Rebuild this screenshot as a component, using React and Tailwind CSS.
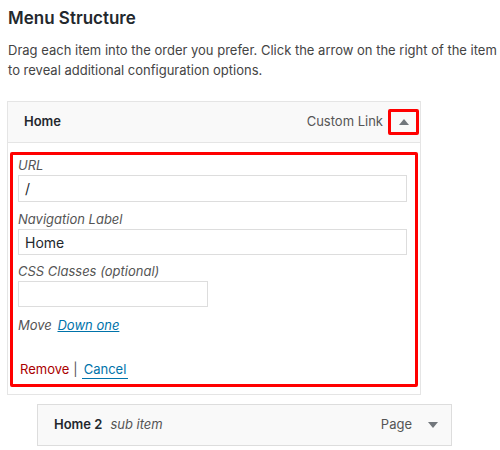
export default function App() {
  return (
    <div className="w-[500px] h-[450px] bg-white text-[#23282d] font-['Inter',sans-serif] overflow-hidden">
      <div className="pl-2 pt-[7px]">
        <h2 className="text-[17px] font-semibold leading-[22px]">Menu Structure</h2>
        <p className="mt-[11px] text-[13px] leading-5 text-[#444] whitespace-nowrap">
          Drag each item into the order you prefer. Click the arrow on the right of the item
          <br />
          to reveal additional configuration options.
        </p>
      </div>

      <div className="ml-[7px] mt-[21px] w-[414px] border border-[#e5e5e5] bg-white">
        <div className="h-[41px] flex items-center bg-[#f9f9f9] border-b border-[#e5e5e5] pl-[16px] pr-[1px]">
          <span className="text-[13px] font-semibold">Home</span>
          <span className="ml-auto text-[13px] text-[#555]">Custom Link</span>
          <span className="ml-[5px] w-[31px] h-[26px] border-[3px] border-[#ff0000] rounded-[2px] flex items-center justify-center">
            <svg width="10" height="6" viewBox="0 0 10 6">
              <path d="M5 0 L10 6 L0 6 Z" fill="#72777c" />
            </svg>
          </span>
        </div>

        <div className="px-[2px] pt-[9px] pb-[7px]">
          <div className="border-[3px] border-[#ff0000] rounded-[2px] pl-[5px] pr-[8px] pb-[5px]">
            <label className="block text-[13px] italic text-[#555] leading-5">URL</label>
            <div className="h-[27px] border border-[#ddd] flex items-center pl-[6px] text-[14px]">/</div>

            <label className="block mt-[7px] text-[13px] italic text-[#555] leading-5">Navigation Label</label>
            <div className="h-[26px] border border-[#ddd] flex items-center pl-[6px] text-[14px]">Home</div>

            <label className="block mt-[6px] text-[13px] italic text-[#555] leading-5">CSS Classes (optional)</label>
            <div className="w-[190px] h-[26px] border border-[#ddd]"></div>

            <div className="mt-[8px] text-[13px] leading-5 italic text-[#555]">
              Move <a className="ml-[2px] text-[#0073aa] underline">Down one</a>
            </div>

            <div className="mt-[24px] text-[13px] leading-5 flex items-center">
              <span className="ml-[2px] text-[#a00]">Remove</span>
              <span className="mx-[4px] text-[#555]">|</span>
              <span className="text-[#0073aa] border-b border-[#0073aa] leading-[18px] px-[2px]">Cancel</span>
            </div>
          </div>
        </div>
      </div>

      <div className="ml-[37px] mt-[9px] w-[415px] h-[42px] border border-[#ddd] bg-[#f9f9f9] flex items-center pl-[16px] pr-[13px]">
        <span className="text-[13px] font-semibold">Home 2</span>
        <span className="ml-[8px] text-[13px] italic text-[#555]">sub item</span>
        <span className="ml-auto text-[13px] text-[#555]">Page</span>
        <svg className="ml-[16px]" width="10" height="6" viewBox="0 0 10 6">
          <path d="M0 0 L10 0 L5 6 Z" fill="#72777c" />
        </svg>
      </div>
    </div>
  )
}
